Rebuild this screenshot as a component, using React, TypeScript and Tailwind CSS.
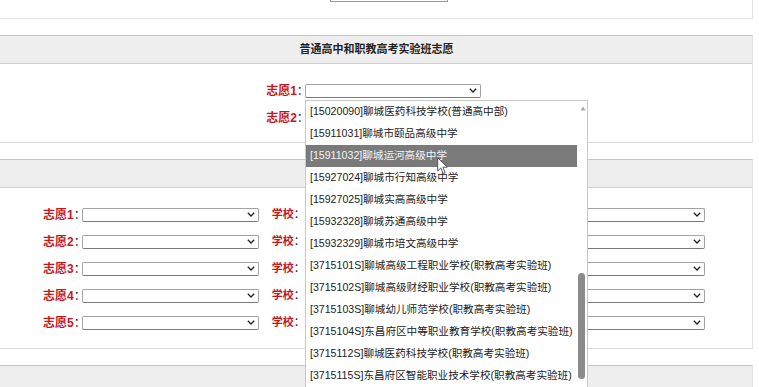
import React from "react";

const FONT = { fontFamily: '"Liberation Sans", "Noto Sans CJK SC", sans-serif' };

function Select({ w }: { w: string }) {
  return (
    <div
      className={`${w} h-[14px] bg-white border border-[#a3a3a3] border-b-[#7a7a7a] rounded-[2px] flex items-center justify-end pr-[3px]`}
    >
      <svg width="8" height="5" viewBox="0 0 8 5">
        <path d="M0.8 0.8 L4 4 L7.2 0.8" stroke="#222" strokeWidth="1.3" fill="none" />
      </svg>
    </div>
  );
}

function Label({ n }: { n: string }) {
  return (
    <span className="text-[12px] leading-none whitespace-nowrap mr-[-4px]">
      <span className="font-bold text-[#c8161d]">{n}</span>
      <span className="text-[#222]">：</span>
    </span>
  );
}

const items = [
  "[15020090]聊城医药科技学校(普通高中部)",
  "[15911031]聊城市颐品高级中学",
  "[15911032]聊城运河高级中学",
  "[15927024]聊城市行知高级中学",
  "[15927025]聊城实高高级中学",
  "[15932328]聊城苏通高级中学",
  "[15932329]聊城市培文高级中学",
  "[3715101S]聊城高级工程职业学校(职教高考实验班)",
  "[3715102S]聊城高级财经职业学校(职教高考实验班)",
  "[3715103S]聊城幼儿师范学校(职教高考实验班)",
  "[3715104S]东昌府区中等职业教育学校(职教高考实验班)",
  "[3715112S]聊城医药科技学校(职教高考实验班)",
  "[3715115S]东昌府区智能职业技术学校(职教高考实验班)",
];

export default function App() {
  return (
    <div className="relative w-[759px] h-[387px] overflow-hidden bg-white text-[#222]" style={FONT}>
      <div className="w-[753px]">
        {/* top panel remnant */}
        <div className="h-[19px] border-b border-r border-[#e2e2e2]">
          <div className="ml-[330px] w-[118px] h-[2px] border-b border-x border-[#9a9a9a]" />
        </div>

        {/* panel 2 */}
        <div className="mt-[16px] border-t border-[#c6c6c6] border-r border-r-[#e2e2e2] border-b border-b-[#dcdcdc]">
          <div className="h-[28px] bg-[#eeeeee] border-b border-[#cfcfcf] flex items-center justify-center">
            <span className="text-[11px] font-bold text-[#222] pl-[1px]">普通高中和职教高考实验班志愿</span>
          </div>
          <div className="pt-[13px] pb-[11px]">
            <div className="h-[27px] flex items-center justify-center pr-[5px]">
              <Label n="志愿1" />
              <Select w="w-[176px]" />
            </div>
            <div className="h-[27px] flex items-center justify-center pr-[5px]">
              <Label n="志愿2" />
              <Select w="w-[176px]" />
            </div>
          </div>
        </div>

        {/* panel 3 */}
        <div className="mt-[16px] border-t border-[#c6c6c6] border-r border-r-[#e2e2e2] border-b border-b-[#dcdcdc]">
          <div className="h-[28px] bg-[#eeeeee] border-b border-[#cfcfcf]" />
          <div className="pt-[13px] pb-[12px]">
            {["志愿1", "志愿2", "志愿3", "志愿4", "志愿5"].map((n) => (
              <div key={n} className="h-[27px] flex items-center pl-[43px]">
                <Label n={n} />
                <Select w="w-[177px]" />
                <div className="w-[13px]" />
                <span className="text-[11px] leading-none whitespace-nowrap mr-[3px]">
                  <span className="font-bold text-[#c8161d]">学校</span>
                  <span className="text-[#222]">：</span>
                </span>
                <Select w="w-[397px]" />
              </div>
            ))}
          </div>
        </div>

        {/* panel 4 */}
        <div className="mt-[16px] border-t border-[#c6c6c6] border-r border-r-[#e2e2e2]">
          <div className="h-[28px] bg-[#eeeeee] border-b border-[#cfcfcf]" />
          <div className="h-[60px]" />
        </div>
      </div>

      {/* open dropdown list */}
      <div className="absolute left-[305px] top-[100px] w-[283px] h-[300px] bg-white border border-[#c8c8c8] flex">
        <div className="w-[271px]">
          {items.map((t, i) => (
            <div
              key={t}
              className={`h-[22px] flex items-center pl-[4px] text-[10.6px] whitespace-nowrap ${
                i === 2 ? "bg-[#7a7a7a] text-[#f4f4f4]" : "text-[#222]"
              }`}
            >
              {t}
            </div>
          ))}
        </div>
        <div className="relative flex-1">
          <svg className="absolute left-[3px] top-[5px]" width="6" height="5" viewBox="0 0 6 5">
            <path d="M3 0.5 L5.5 4.5 L0.5 4.5 Z" fill="#a5a5a5" />
          </svg>
          <div className="absolute left-[1px] top-[172px] w-[7px] h-[106px] rounded-[4px] bg-[#8b8b8b]" />
        </div>
      </div>

      {/* mouse cursor */}
      <svg className="absolute left-[437px] top-[157px]" width="12" height="18" viewBox="0 0 12 18">
        <path
          d="M0.7 0.7 L0.7 14 L3.8 11 L6.2 16.5 L8.2 15.6 L5.9 10.2 L10.2 10.2 Z"
          fill="#fff"
          stroke="#555"
          strokeWidth="1"
          strokeLinejoin="round"
        />
      </svg>
    </div>
  );
}
